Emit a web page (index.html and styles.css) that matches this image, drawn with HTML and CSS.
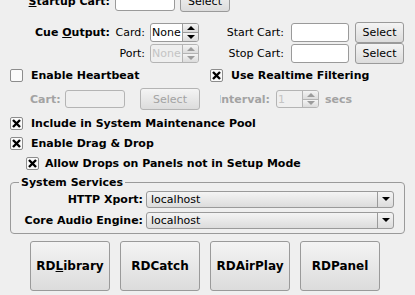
FILE: index.html
```html
<!DOCTYPE html>
<html lang="en">
<head>
  <meta charset="UTF-8">
  <title>RDAdmin - Host Settings</title>
  <link rel="stylesheet" href="styles.css">
</head>
<body>
  <div class="dialog">
    <div class="row row-startup">
      <label class="lbl bold w-main"><u>S</u>tartup Cart:</label>
      <span class="field w-startup"></span>
      <button class="btn btn-startup">Select</button>
    </div>

    <div class="row row-cue">
      <div class="half">
        <label class="lbl bold w-main">Cue <u>O</u>utput:</label>
        <label class="lbl w-sub">Card:</label>
        <span class="spin">
          <span class="spin-val">None</span>
          <span class="spin-btns"><span class="up"></span><span class="down"></span></span>
        </span>
      </div>
      <div class="half-right">
        <label class="lbl w-cart">Start Cart:</label>
        <span class="field w-cartfield"></span>
        <button class="btn btn-cart">Select</button>
      </div>
    </div>

    <div class="row row-cue">
      <div class="half">
        <span class="w-main"></span>
        <label class="lbl w-sub">Port:</label>
        <span class="spin disabled">
          <span class="spin-val">None</span>
          <span class="spin-btns"><span class="up"></span><span class="down"></span></span>
        </span>
      </div>
      <div class="half-right">
        <label class="lbl w-cart">Stop Cart:</label>
        <span class="field w-cartfield"></span>
        <button class="btn btn-cart">Select</button>
      </div>
    </div>

    <div class="row row-heart">
      <div class="half check-row">
        <span class="check"></span>
        <span class="bold">Enable Heartbeat</span>
      </div>
      <div class="half-right check-row">
        <span class="check checked">
          <svg width="9" height="9" viewBox="0 0 9 9"><path d="M1 1L8 8M8 1L1 8" stroke="#000" stroke-width="2.4"/></svg>
        </span>
        <span class="bold">Use Realtime Filtering</span>
      </div>
    </div>

    <div class="row row-hbcart">
      <div class="half hb-cart">
        <label class="lbl bold dim w-hblabel">Cart:</label>
        <span class="field disabled w-hbfield"></span>
        <button class="btn disabled btn-hb">Select</button>
      </div>
      <div class="half-right interval">
        <label class="bold dim w-interval"><span>Interval:</span></label>
        <span class="spin spin-small disabled">
          <span class="spin-val">1</span>
          <span class="spin-btns"><span class="up"></span><span class="down"></span></span>
        </span>
        <span class="bold dim secs">secs</span>
      </div>
    </div>

    <div class="row row-opt first-opt check-row">
      <span class="check checked">
        <svg width="9" height="9" viewBox="0 0 9 9"><path d="M1 1L8 8M8 1L1 8" stroke="#000" stroke-width="2.4"/></svg>
      </span>
      <span class="bold">Include in System Maintenance Pool</span>
    </div>
    <div class="row row-opt check-row">
      <span class="check checked">
        <svg width="9" height="9" viewBox="0 0 9 9"><path d="M1 1L8 8M8 1L1 8" stroke="#000" stroke-width="2.4"/></svg>
      </span>
      <span class="bold">Enable Drag &amp; Drop</span>
    </div>
    <div class="row row-opt check-row sub-opt">
      <span class="check checked">
        <svg width="9" height="9" viewBox="0 0 9 9"><path d="M1 1L8 8M8 1L1 8" stroke="#000" stroke-width="2.4"/></svg>
      </span>
      <span class="bold">Allow Drops on Panels not in Setup Mode</span>
    </div>

    <fieldset class="group">
      <legend class="bold">System Services</legend>
      <div class="combo-row">
        <label class="lbl bold w-svc">HTTP Xport:</label>
        <span class="combo">
          <span class="combo-val">localhost</span>
          <span class="combo-arrow"></span>
        </span>
      </div>
      <div class="combo-row">
        <label class="lbl bold w-svc">Core Audio Engine:</label>
        <span class="combo">
          <span class="combo-val">localhost</span>
          <span class="combo-arrow"></span>
        </span>
      </div>
    </fieldset>

    <div class="launchers">
      <button class="btn big">RD<u>L</u>ibrary</button>
      <button class="btn big">RDCatch</button>
      <button class="btn big">RDAirPlay</button>
      <button class="btn big">RDPanel</button>
    </div>
  </div>
</body>
</html>
```

FILE: styles.css
```css
:root {
  --bg: #efefef;
  --border: #9a9a9a;
  --dim: #a3a3a3;
  --btn-top: #f4f4f4;
  --btn-bottom: #dcdcdc;
}

* {
  margin: 0;
  padding: 0;
  box-sizing: border-box;
}

body {
  width: 415px;
  height: 295px;
  overflow: hidden;
  background: var(--bg);
  font-family: "DejaVu Sans", sans-serif;
  font-size: 11px;
  color: #000;
}

.dialog {
  margin-top: -10px;
}

.bold {
  font-weight: bold;
}

.dim {
  color: var(--dim);
}

.row {
  display: flex;
  align-items: center;
}

.half {
  width: 200px;
  display: flex;
  align-items: center;
}

.half-right {
  flex: 1;
  display: flex;
  align-items: center;
}

.lbl {
  display: block;
  text-align: right;
  white-space: nowrap;
}

/* inputs */
.field {
  display: block;
  height: 19px;
  background: #fff;
  border: 1px solid var(--border);
  border-radius: 3px;
}

.field.disabled {
  background: var(--bg);
  border-color: #b4b4b4;
}

.btn {
  display: flex;
  align-items: center;
  justify-content: center;
  font-family: inherit;
  font-size: 11px;
  color: #000;
  background: linear-gradient(var(--btn-top), var(--btn-bottom));
  border: 1px solid var(--border);
  border-radius: 3px;
}

.btn.disabled {
  color: var(--dim);
  border-color: #b4b4b4;
}

/* startup row */
.row-startup {
  height: 22px;
  margin-bottom: 10px;
}

.w-main {
  width: 110px;
  margin-right: 5px;
}

.w-startup {
  width: 60px;
}

.btn-startup {
  width: 50px;
  height: 22px;
  margin-left: 5px;
}

/* cue output / start + stop cart */
.row-cue {
  height: 21px;
}

.w-sub {
  width: 30px;
  margin-right: 5px;
}

.w-cart {
  width: 91px;
  padding-right: 7px;
}

.w-cartfield {
  width: 58px;
}

.btn-cart {
  width: 49px;
  height: 21px;
  margin-left: 6px;
}

.spin {
  display: flex;
  width: 49px;
  height: 19px;
  background: #fff;
  border: 1px solid var(--border);
  border-radius: 3px;
  overflow: hidden;
}

.spin-val {
  flex: 1;
  padding-left: 1px;
  font-size: 11px;
  line-height: 17px;
  overflow: hidden;
}

.spin-btns {
  width: 16px;
  display: flex;
  flex-direction: column;
  border-left: 1px solid var(--border);
}

.spin-btns span {
  flex: 1;
  display: flex;
  align-items: center;
  justify-content: center;
  background: linear-gradient(var(--btn-top), var(--btn-bottom));
}

.spin-btns .up {
  border-bottom: 1px solid var(--border);
}

.spin-btns .up::after {
  content: "";
  border-left: 4px solid transparent;
  border-right: 4px solid transparent;
  border-bottom: 4px solid #000;
}

.spin-btns .down::after {
  content: "";
  border-left: 4px solid transparent;
  border-right: 4px solid transparent;
  border-top: 4px solid #000;
}

.spin.disabled {
  background: var(--bg);
  border-color: #b4b4b4;
  color: #c4c4c4;
}

.spin.disabled .spin-btns {
  border-left-color: #b4b4b4;
}

.spin.disabled .up {
  border-bottom-color: #b4b4b4;
}

.spin.disabled .up::after {
  border-bottom-color: #9c9c9c;
}

.spin.disabled .down::after {
  border-top-color: #9c9c9c;
}

/* checkboxes */
.check-row {
  gap: 8px;
  padding-left: 10px;
}

.check {
  width: 13px;
  height: 13px;
  display: flex;
  align-items: center;
  justify-content: center;
  flex-shrink: 0;
  background: #fafafa;
  border: 1px solid #8c8c8c;
  border-radius: 2px;
}

.row-heart {
  height: 23px;
}

/* heartbeat cart / interval */
.row-hbcart {
  height: 24px;
}

.hb-cart {
  padding-left: 30px;
}

.w-hblabel {
  width: 29px;
  text-align: left;
  margin-right: 6px;
}

.w-hbfield {
  width: 60px;
  height: 18px;
}

.btn-hb {
  width: 60px;
  height: 22px;
  margin-left: 15px;
}

.interval {
  padding-left: 20px;
}

.w-interval {
  width: 50px;
  display: flex;
  justify-content: flex-end;
  overflow: hidden;
  white-space: nowrap;
  margin-right: 6px;
}

.w-interval span {
  flex-shrink: 0;
}

.spin-small {
  width: 43px;
  height: 18px;
}

.secs {
  margin-left: 6px;
}

/* options */
.row-opt {
  height: 20px;
}

.first-opt {
  margin-top: 2px;
}

.sub-opt {
  padding-left: 26px;
  gap: 6px;
}

/* system services */
.group {
  margin: 3px 0 0 10px;
  width: 395px;
  border: 1px solid var(--border);
  border-radius: 4px;
  padding: 0 0 4px 0;
}

.group legend {
  margin-left: 8px;
  padding: 0 2px;
  line-height: 13px;
}

.combo-row {
  display: flex;
  align-items: center;
  height: 18px;
  margin-top: 1px;
}

.combo-row + .combo-row {
  margin-top: 3px;
}

.w-svc {
  width: 132px;
  margin-right: 3px;
}

.combo {
  display: flex;
  width: 248px;
  height: 17px;
  background: linear-gradient(var(--btn-top), var(--btn-bottom));
  border: 1px solid var(--border);
  border-radius: 3px;
}

.combo-val {
  flex: 1;
  padding-left: 4px;
  line-height: 15px;
}

.combo-arrow {
  width: 16px;
  display: flex;
  align-items: center;
  justify-content: center;
  border-left: 1px solid var(--border);
}

.combo-arrow::after {
  content: "";
  border-left: 4px solid transparent;
  border-right: 4px solid transparent;
  border-top: 4px solid #000;
}

/* launcher buttons */
.launchers {
  display: flex;
  gap: 10px;
  margin-top: 7px;
  padding-left: 30px;
}

.btn.big {
  width: 80px;
  height: 50px;
  font-size: 12px;
  font-weight: bold;
}
```
